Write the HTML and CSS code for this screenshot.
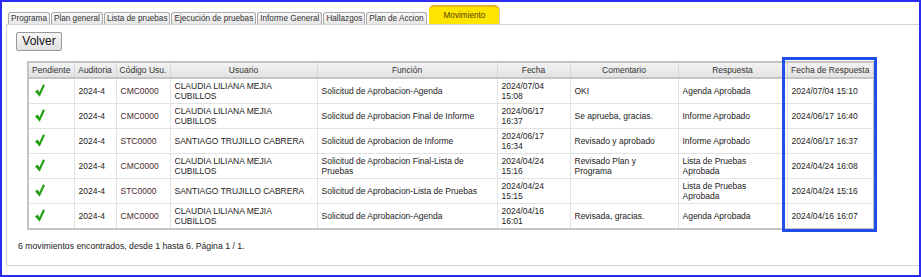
FILE: index.html
```html
<!DOCTYPE html>
<html lang="es">
    <head>
        <meta charset="utf-8" >
        <title>Movimiento</title>
        <link rel="stylesheet" href="styles.css">
    </head>
    <body>
        <div class="frame">
            <div class="tabs">
                <span class="tab">Programa</span>
                <span class="tab">Plan general</span>
                <span class="tab">Lista de pruebas</span>
                <span class="tab">Ejecución de pruebas</span>
                <span class="tab">Informe General</span>
                <span class="tab">Hallazgos</span>
                <span class="tab">Plan de Accion</span>
                <span class="tab tab-active">Movimiento</span>
            </div>
            <div class="panel">
                <button class="btn-volver">Volver</button>
                <div class="table-wrap">
                    <table class="grid">
                        <colgroup>
                            <col style="width:46px"><col style="width:42px"><col style="width:54px">
                            <col style="width:147px"><col style="width:180px"><col style="width:73px">
                            <col style="width:108px"><col style="width:109px"><col style="width:87px">
                        </colgroup>
                        <thead>
                            <tr>
                                <th>Pendiente</th><th>Auditoria</th><th>Código Usu.</th><th>Usuario</th>
                                <th>Función</th><th>Fecha</th><th>Comentario</th><th>Respuesta</th><th>Fecha de Respuesta</th>
                            </tr>
                        </thead>
                        <tbody>
                            <tr>
                                <td class="chk"><svg class="check" viewBox="0 0 11 14"><path d="M0 8 L3 6 L4.8 8.8 L8.8 0 L11 1.3 L5.2 14 Z"/></svg></td>
                                <td>2024-4</td><td class="code">CMC0000</td><td>CLAUDIA LILIANA MEJIA CUBILLOS</td>
                                <td>Solicitud de Aprobacion-Agenda</td><td>2024/07/04 15:08</td><td>OKI</td>
                                <td>Agenda Aprobada</td><td>2024/07/04 15:10</td>
                            </tr>
                            <tr>
                                <td class="chk"><svg class="check" viewBox="0 0 11 14"><path d="M0 8 L3 6 L4.8 8.8 L8.8 0 L11 1.3 L5.2 14 Z"/></svg></td>
                                <td>2024-4</td><td class="code">CMC0000</td><td>CLAUDIA LILIANA MEJIA CUBILLOS</td>
                                <td>Solicitud de Aprobacion Final de Informe</td><td>2024/06/17 16:37</td><td>Se aprueba, gracias.</td>
                                <td>Informe Aprobado</td><td>2024/06/17 16:40</td>
                            </tr>
                            <tr>
                                <td class="chk"><svg class="check" viewBox="0 0 11 14"><path d="M0 8 L3 6 L4.8 8.8 L8.8 0 L11 1.3 L5.2 14 Z"/></svg></td>
                                <td>2024-4</td><td class="code">STC0000</td><td>SANTIAGO TRUJILLO CABRERA</td>
                                <td>Solicitud de Aprobacion de Informe</td><td>2024/06/17 16:34</td><td>Revisado y aprobado</td>
                                <td>Informe Aprobado</td><td>2024/06/17 16:37</td>
                            </tr>
                            <tr>
                                <td class="chk"><svg class="check" viewBox="0 0 11 14"><path d="M0 8 L3 6 L4.8 8.8 L8.8 0 L11 1.3 L5.2 14 Z"/></svg></td>
                                <td>2024-4</td><td class="code">CMC0000</td><td>CLAUDIA LILIANA MEJIA CUBILLOS</td>
                                <td>Solicitud de Aprobacion Final-Lista de Pruebas</td><td>2024/04/24 15:16</td><td>Revisado Plan y Programa</td>
                                <td>Lista de Pruebas Aprobada</td><td>2024/04/24 16:08</td>
                            </tr>
                            <tr>
                                <td class="chk"><svg class="check" viewBox="0 0 11 14"><path d="M0 8 L3 6 L4.8 8.8 L8.8 0 L11 1.3 L5.2 14 Z"/></svg></td>
                                <td>2024-4</td><td class="code">STC0000</td><td>SANTIAGO TRUJILLO CABRERA</td>
                                <td>Solicitud de Aprobacion-Lista de Pruebas</td><td>2024/04/24 15:15</td><td></td>
                                <td>Lista de Pruebas Aprobada</td><td>2024/04/24 15:16</td>
                            </tr>
                            <tr>
                                <td class="chk"><svg class="check" viewBox="0 0 11 14"><path d="M0 8 L3 6 L4.8 8.8 L8.8 0 L11 1.3 L5.2 14 Z"/></svg></td>
                                <td>2024-4</td><td class="code">CMC0000</td><td>CLAUDIA LILIANA MEJIA CUBILLOS</td>
                                <td>Solicitud de Aprobacion-Agenda</td><td>2024/04/16 16:01</td><td>Revisada, gracias.</td>
                                <td>Agenda Aprobada</td><td>2024/04/16 16:07</td>
                            </tr>
                        </tbody>
                    </table>
                    <div class="highlight"></div>
                </div>
                <p class="summary">6 movimientos encontrados, desde 1 hasta 6. Página 1 / 1.</p>
            </div>
        </div>
    </body>
</html>
```

FILE: styles.css
```css
html, body {
    margin: 0;
    padding: 0;
    background: #fff;
}
body, button, table {
    font-family: "Liberation Sans", Arial, sans-serif;
}
.frame {
    box-sizing: border-box;
    width: 921px;
    height: 277px;
    border: 2px solid #2b2bf2;
    overflow: hidden;
    padding-top: 2px;
}
/* pestañas */
.tabs {
    display: flex;
    align-items: flex-end;
    gap: 1px;
    padding-left: 6px;
    height: 20px;
}
.tab {
    font-size: 8.2px;
    line-height: 11px;
    height: 11px;
    padding: 0 2px;
    color: #333;
    background: linear-gradient(#f8f8f8, #e6e6e6);
    border: 1px solid #aaa;
    border-bottom: none;
    border-radius: 3px 3px 0 0;
    white-space: nowrap;
}
.tab-active {
    height: 17px;
    line-height: 17px;
    margin-left: 1px;
    padding: 0 14px 0 15px;
    color: #4d4300;
    background: #ffe500;
    border: none;
    border-top: 2px solid #f2b41c;
    border-radius: 5px 5px 0 0;
    box-shadow: 1px 0 0 #c8c8c8;
}
.panel {
    box-sizing: border-box;
    margin-left: 4px;
    height: 242px;
    border: 1px solid #d2d2d2;
    border-right: none;
    padding: 6px 9px;
}
.btn-volver {
    font-size: 12px;
    height: 19px;
    width: 46px;
    padding: 0;
    color: #111;
    background: linear-gradient(#f6f6f6, #e2e2e2);
    border: 1px solid #9a9a9a;
    border-radius: 2px;
}
.table-wrap {
    position: relative;
    margin: 10px 0 0 11px;
    width: 846px;
}
.grid {
    table-layout: fixed;
    width: 846px;
    border-collapse: collapse;
    border: 2px solid #c4c4c4;
    font-size: 8.5px;
    line-height: 10px;
    color: #222;
}
.grid th {
    height: 14px;
    padding: 0 3px;
    font-weight: normal;
    color: #333;
    background: linear-gradient(#f2f2f2, #e2e2e2);
    border: 1px solid #d6d6d6;
    border-bottom: 2px solid #c4c4c4;
    white-space: nowrap;
}
.grid td {
    height: 20px;
    padding: 2px 4px;
    border: 1px solid #e2e2e2;
    vertical-align: middle;
}
.grid td.code {
    color: #4a2a2a;
}
.grid td.chk {
    padding-left: 6px;
}
.check {
    display: block;
    width: 10px;
    height: 13px;
    fill: #24a014;
}
/* recuadro azul de la anotación */
.highlight {
    position: absolute;
    left: 755px;
    top: -4px;
    width: 89px;
    height: 169px;
    border: 3px solid #1f4fe6;
}
.summary {
    margin: 11px 0 0 2px;
    font-size: 8.7px;
    color: #222;
}
```
